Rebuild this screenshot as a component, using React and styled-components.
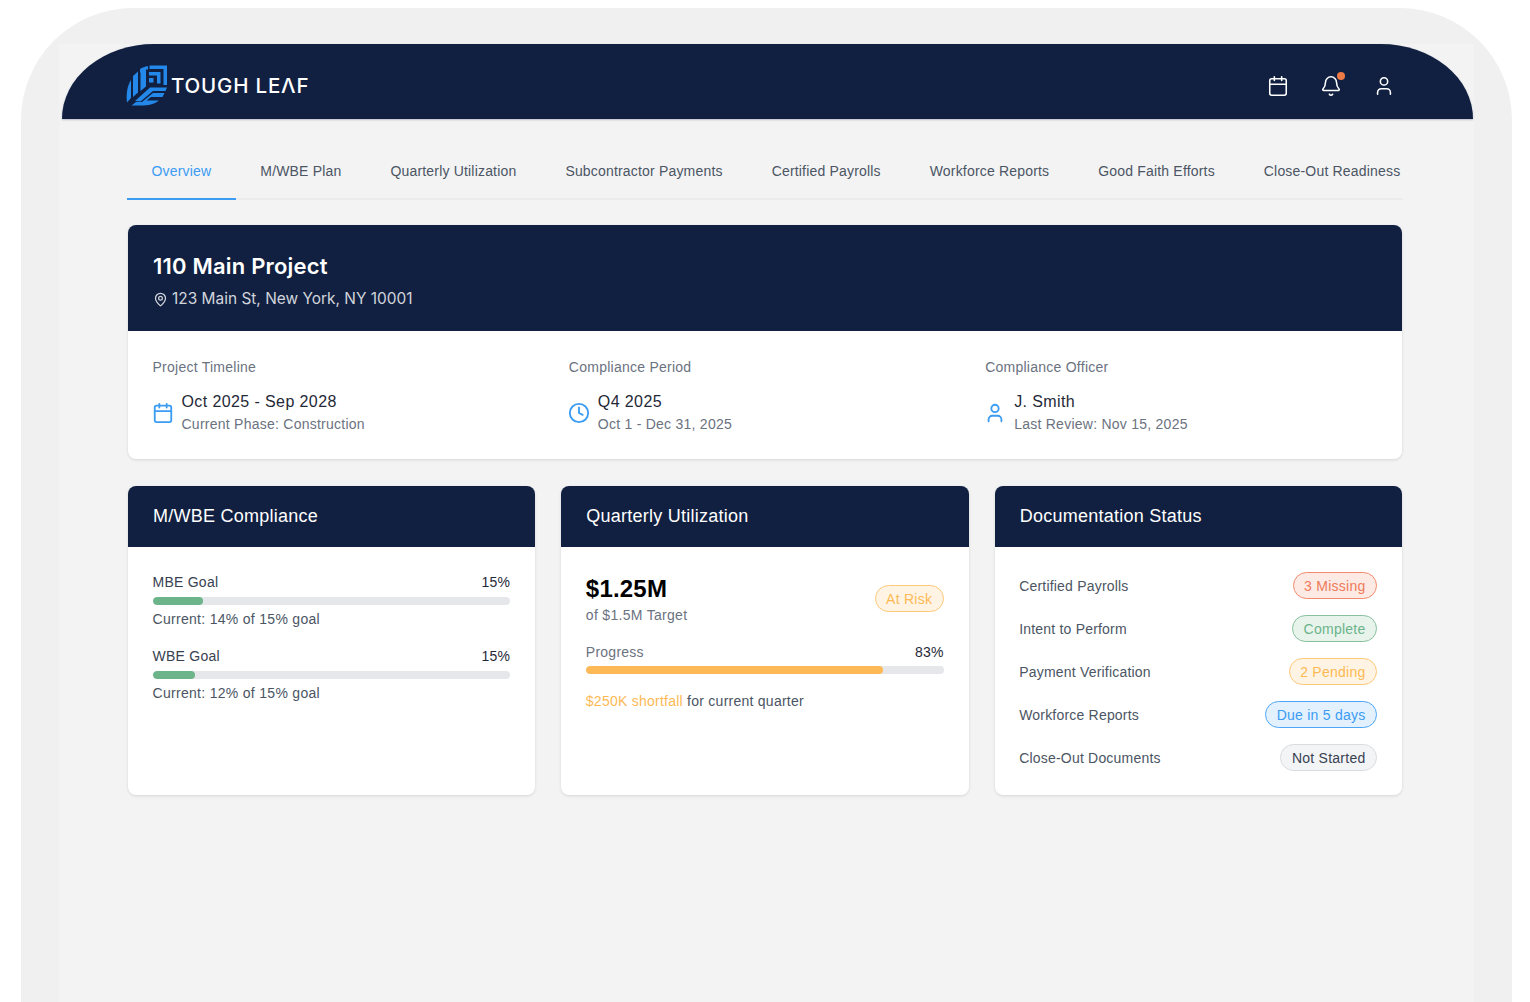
import styled, { createGlobalStyle } from 'styled-components';
import { Calendar, Bell, User, MapPin, Clock } from 'lucide-react';

const GlobalStyle = createGlobalStyle`
  html, body {
    margin: 0;
    height: 100%;
    background: #fff;
    overflow: hidden;
  }
  body {
    font-family: "Liberation Sans", Arial, sans-serif;
  }
  * { box-sizing: border-box; }
`;

const Bezel = styled.div`
  margin: 8px 18px 0 21px;
  height: 994px;
  padding: 36px 38px 0 38px;
  background: #f0f0f0;
  border-radius: 112px 112px 0 0;
`;

const Screen = styled.div`
  height: 958px;
  padding: 0 1px 0 3px;
  background: #f3f3f4;
`;

const Header = styled.header`
  height: 75px;
  padding: 8px 78px 0 64px;
  display: flex;
  align-items: center;
  justify-content: space-between;
  background: #112041;
  border-radius: 92px 92px 0 0 / 75px 75px 0 0;
  box-shadow: 0 1px 2px rgba(17, 32, 65, 0.25);
`;

const Brand = styled.div`
  display: flex;
  align-items: center;
  gap: 4px;
`;

const BrandName = styled.span`
  color: #fff;
  font-family: Inter, sans-serif;
  font-size: 20.5px;
  font-weight: 500;
  letter-spacing: 0.8px;
`;

const HeaderIcons = styled.div`
  display: flex;
  align-items: center;
  gap: 31px;
  color: #fff;
`;

const BellWrap = styled.span`
  position: relative;
  display: flex;
`;

const BellDot = styled.span`
  position: absolute;
  top: -3px;
  right: -3px;
  width: 8px;
  height: 8px;
  border-radius: 50%;
  background: #ee7a45;
`;

const Content = styled.main`
  padding: 28px 70px 0 65px;
`;

const Tabs = styled.nav`
  display: flex;
  border-bottom: 2px solid #ececed;
  height: 53px;
`;

const Tab = styled.a`
  height: 53px;
  padding: 16px 24.5px 0;
  font-size: 14px;
  line-height: 16px;
  letter-spacing: 0.18px;
  color: ${p => (p.$active ? '#3b9cf2' : '#4b5563')};
  border-bottom: 2px solid ${p => (p.$active ? '#3b9cf2' : 'transparent')};
  white-space: nowrap;
`;

const Card = styled.section`
  background: #fff;
  border-radius: 8px;
  overflow: hidden;
  box-shadow: 0 1px 3px rgba(0, 0, 0, 0.12);
`;

const ProjectCard = styled(Card)`
  margin: 25px 1px 0;
  height: 234px;
`;

const ProjectHead = styled.div`
  height: 106px;
  padding: 26px 25px 0;
  background: #112041;
  color: #fff;
`;

const ProjectTitle = styled.h1`
  margin: 0;
  font-family: Inter, sans-serif;
  font-size: 22px;
  line-height: 30px;
  font-weight: 600;
  letter-spacing: 0.2px;
`;

const Address = styled.div`
  margin-top: 8px;
  display: flex;
  align-items: center;
  gap: 4px;
  font-family: Inter, sans-serif;
  font-size: 15.45px;
  line-height: 20px;
  color: #d1d5db;
`;

const FactGrid = styled.div`
  display: grid;
  grid-template-columns: repeat(3, 1fr);
  gap: 24px;
  padding: 26px 24.5px 0;
`;

const FactLabel = styled.div`
  font-size: 14px;
  line-height: 20px;
  letter-spacing: 0.25px;
  color: #6b7280;
`;

const FactRow = styled.div`
  margin: 14px 0 0 -1px;
  display: flex;
  align-items: center;
  gap: 8px;
  color: #3b9cf2;
`;

const FactMain = styled.div`
  font-size: 16px;
  line-height: 22px;
  letter-spacing: 0.4px;
  color: #1f2937;
`;

const FactSub = styled.div`
  margin-top: 1px;
  font-size: 14px;
  line-height: 20px;
  letter-spacing: 0.25px;
  color: #6b7280;
`;

const CardGrid = styled.div`
  margin: 27px 1px 0;
  display: grid;
  grid-template-columns: repeat(3, 1fr);
  gap: 26px;
`;

const PanelCard = styled(Card)`
  height: 309px;
`;

const PanelHead = styled.h2`
  margin: 0;
  height: 61px;
  padding: 0 25px;
  display: flex;
  align-items: center;
  background: #112041;
  color: #fff;
  font-size: 18px;
  font-weight: 400;
  letter-spacing: 0.25px;
`;

const PanelBody = styled.div`
  padding: ${p => p.$pad} 25px 0 24.5px;
`;

const SplitRow = styled.div`
  display: flex;
  align-items: center;
  justify-content: space-between;
  font-size: 14px;
  line-height: 20px;
  letter-spacing: 0.25px;
  color: ${p => p.$muted ? '#6b7280' : '#374151'};
`;

const Value = styled.span`
  color: #1f2937;
`;

const Track = styled.div`
  margin-top: 4px;
  height: 8px;
  border-radius: 4px;
  background: #e5e7eb;
  overflow: hidden;
`;

const GoalTrack = styled(Track)`
  margin-top: 5px;
`;

const Fill = styled.div`
  height: 100%;
  border-radius: 4px;
  background: ${p => p.$color};
`;

const Note = styled.div`
  margin-top: 4px;
  font-size: 14px;
  line-height: 20px;
  letter-spacing: 0.3px;
  color: #4b5563;
`;

const Goal = styled.div`
  margin-bottom: 17px;
`;

const Amount = styled.div`
  font-size: 24px;
  line-height: 30px;
  font-weight: 700;
  letter-spacing: 0.2px;
  color: #000;
`;

const Target = styled.div`
  margin-top: 1px;
  font-size: 14px;
  line-height: 20px;
  letter-spacing: 0.3px;
  color: #6b7280;
`;

const SummaryRow = styled.div`
  display: flex;
  align-items: center;
  justify-content: space-between;
  margin-bottom: 17px;
`;

const Shortfall = styled.div`
  margin-top: 17px;
  font-size: 14px;
  line-height: 20px;
  letter-spacing: 0.25px;
  color: #4b5563;
`;

const Warn = styled.span`
  color: #fdb955;
`;

const StatusRow = styled.div`
  height: 27px;
  margin-bottom: 16px;
  display: flex;
  align-items: center;
  justify-content: space-between;
  font-size: 14px;
  letter-spacing: 0.2px;
  color: #4b5563;
`;

const tones = {
  red: ['#fdeae5', '#f18b6c', '#ee7a58'],
  green: ['#e8f3ec', '#86c09e', '#6cb48a'],
  amber: ['#fff4e3', '#fdc877', '#fdb955'],
  blue: ['#e3f1fe', '#4da6f5', '#3b9cf2'],
  gray: ['#f3f4f6', '#d8dbe0', '#374151'],
};

const Pill = styled.span`
  height: 27px;
  padding: 0 10.5px;
  display: inline-flex;
  align-items: center;
  border-radius: 14px;
  font-size: 14px;
  letter-spacing: 0.25px;
  background: ${p => tones[p.$tone][0]};
  border: 1.5px solid ${p => tones[p.$tone][1]};
  color: ${p => tones[p.$tone][2]};
`;

const RiskPill = styled(Pill)`
  margin-bottom: 2px;
`;

function LeafLogo() {
  return (
    <svg width="41" height="41" viewBox="0 0 41 41" fill="#2388ea">
      <path d="M5 15 V33 L1 37.500 C0 30 1 21 5 15 Z" />
      <path d="M7 11 L12 6.500 V27.500 L7 32 Z" />
      <path d="M14 4 C16 2.500 19 1.500 22 1 V4.500 H20 V21.500 L14.500 26 V7.500 H14 Z" />
      <path d="M23.500 0.500 H41 V20 H37.500 V4 H23.500 Z" />
      <path d="M23 7 H34.500 V18.500 H31 V10.500 H23 Z" />
      <rect x="23" y="13" width="4.500" height="4.500" />
      <path d="M9 36 L24 22.500 H41 L39.500 26 H27 L14.500 36.500 Z" />
      <path d="M27 28 H38.500 L36.500 32 H25 L20.500 35.500 H33 C28 39.500 22 40.500 15 40.500 H5.500 L10 37 H16 Z" />
    </svg>
  );
}

const tabs = ['Overview', 'M/WBE Plan', 'Quarterly Utilization', 'Subcontractor Payments', 'Certified Payrolls', 'Workforce Reports', 'Good Faith Efforts', 'Close-Out Readiness'];

const facts = [
  { label: 'Project Timeline', Icon: Calendar, main: 'Oct 2025 - Sep 2028', sub: 'Current Phase: Construction' },
  { label: 'Compliance Period', Icon: Clock, main: 'Q4 2025', sub: 'Oct 1 - Dec 31, 2025' },
  { label: 'Compliance Officer', Icon: User, main: 'J. Smith', sub: 'Last Review: Nov 15, 2025' },
];

const goals = [
  { name: 'MBE Goal', width: 14, note: 'Current: 14% of 15% goal' },
  { name: 'WBE Goal', width: 12, note: 'Current: 12% of 15% goal' },
];

const docs = [
  ['Certified Payrolls', '3 Missing', 'red'],
  ['Intent to Perform', 'Complete', 'green'],
  ['Payment Verification', '2 Pending', 'amber'],
  ['Workforce Reports', 'Due in 5 days', 'blue'],
  ['Close-Out Documents', 'Not Started', 'gray'],
];

export default function App() {
  return (
    <>
      <GlobalStyle />
      <Bezel>
        <Screen>
          <Header>
            <Brand>
              <LeafLogo />
              <BrandName>TOUGH LEΛF</BrandName>
            </Brand>
            <HeaderIcons>
              <Calendar size={22} strokeWidth={1.7} />
              <BellWrap>
                <Bell size={22} strokeWidth={1.7} />
                <BellDot />
              </BellWrap>
              <User size={22} strokeWidth={1.7} />
            </HeaderIcons>
          </Header>
          <Content>
            <Tabs>
              {tabs.map((t, i) => (
                <Tab key={t} $active={i === 0}>{t}</Tab>
              ))}
            </Tabs>
            <ProjectCard>
              <ProjectHead>
                <ProjectTitle>110 Main Project</ProjectTitle>
                <Address><MapPin size={15} />123 Main St, New York, NY 10001</Address>
              </ProjectHead>
              <FactGrid>
                {facts.map(({ label, Icon, main, sub }) => (
                  <div key={label}>
                    <FactLabel>{label}</FactLabel>
                    <FactRow>
                      <Icon size={22} strokeWidth={2} />
                      <div>
                        <FactMain>{main}</FactMain>
                        <FactSub>{sub}</FactSub>
                      </div>
                    </FactRow>
                  </div>
                ))}
              </FactGrid>
            </ProjectCard>
            <CardGrid>
              <PanelCard>
                <PanelHead>M/WBE Compliance</PanelHead>
                <PanelBody $pad="25px">
                  {goals.map(g => (
                    <Goal key={g.name}>
                      <SplitRow>{g.name}<Value>15%</Value></SplitRow>
                      <GoalTrack><Fill $color="#6cb48a" style={{ width: `${g.width}%` }} /></GoalTrack>
                      <Note>{g.note}</Note>
                    </Goal>
                  ))}
                </PanelBody>
              </PanelCard>
              <PanelCard>
                <PanelHead>Quarterly Utilization</PanelHead>
                <PanelBody $pad="27px">
                  <SummaryRow>
                    <div>
                      <Amount>$1.25M</Amount>
                      <Target>of $1.5M Target</Target>
                    </div>
                    <RiskPill $tone="amber">At Risk</RiskPill>
                  </SummaryRow>
                  <SplitRow $muted>Progress<Value>83%</Value></SplitRow>
                  <Track><Fill $color="#fdb955" style={{ width: '83%' }} /></Track>
                  <Shortfall><Warn>$250K shortfall</Warn> for current quarter</Shortfall>
                </PanelBody>
              </PanelCard>
              <PanelCard>
                <PanelHead>Documentation Status</PanelHead>
                <PanelBody $pad="25px">
                  {docs.map(([name, status, tone]) => (
                    <StatusRow key={name}>{name}<Pill $tone={tone}>{status}</Pill></StatusRow>
                  ))}
                </PanelBody>
              </PanelCard>
            </CardGrid>
          </Content>
        </Screen>
      </Bezel>
    </>
  );
}
